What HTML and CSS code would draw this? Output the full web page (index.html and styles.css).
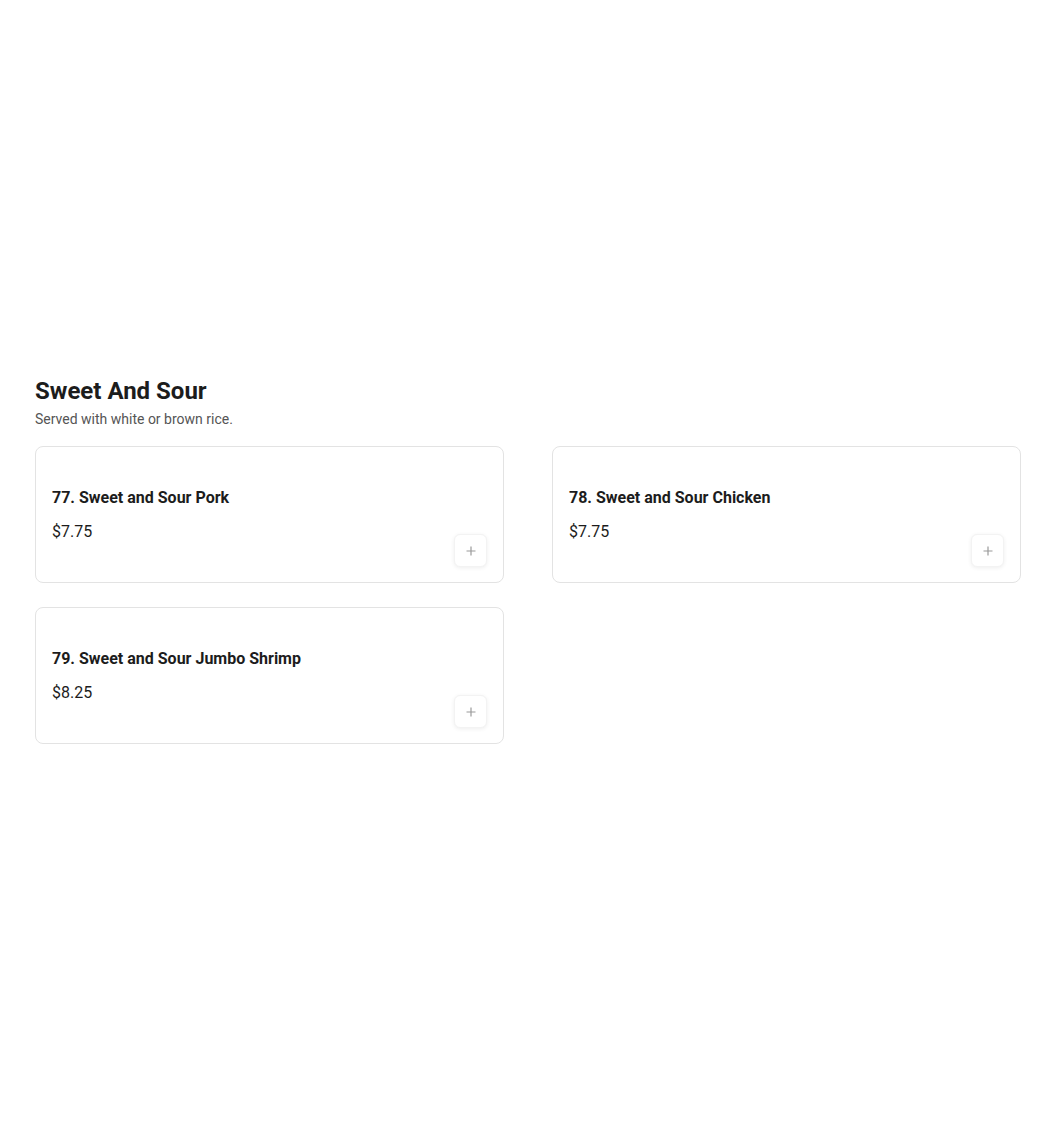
FILE: index.html
```html
<!DOCTYPE html>
<html lang="en">
<head>
<meta charset="utf-8">
<title>Sweet And Sour</title>
<link rel="stylesheet" href="styles.css">
</head>
<body>
<main class="page">
  <section class="category">
    <h2 class="category-title">Sweet And Sour</h2>
    <p class="category-desc">Served with white or brown rice.</p>
    <div class="items">
      <div class="item">
        <div class="item-info">
          <div class="item-name">77. Sweet and Sour Pork</div>
          <div class="item-price">$7.75</div>
        </div>
        <button class="add-btn" aria-label="Add"><svg width="12" height="12" viewBox="0 0 12 12"><path d="M6 1.5v9M1.5 6h9" stroke="#9a9a9a" stroke-width="1.2" fill="none"/></svg></button>
      </div>
      <div class="item">
        <div class="item-info">
          <div class="item-name">78. Sweet and Sour Chicken</div>
          <div class="item-price">$7.75</div>
        </div>
        <button class="add-btn" aria-label="Add"><svg width="12" height="12" viewBox="0 0 12 12"><path d="M6 1.5v9M1.5 6h9" stroke="#9a9a9a" stroke-width="1.2" fill="none"/></svg></button>
      </div>
      <div class="item">
        <div class="item-info">
          <div class="item-name">79. Sweet and Sour Jumbo Shrimp</div>
          <div class="item-price">$8.25</div>
        </div>
        <button class="add-btn" aria-label="Add"><svg width="12" height="12" viewBox="0 0 12 12"><path d="M6 1.5v9M1.5 6h9" stroke="#9a9a9a" stroke-width="1.2" fill="none"/></svg></button>
      </div>
    </div>
  </section>
</main>
</body>
</html>
```
FILE: styles.css
```css
* { box-sizing: border-box; }
html, body { margin: 0; padding: 0; background: #fff; }
body {
  font-family: Roboto, "Liberation Sans", Arial, sans-serif;
  color: #1c1c1c;
}
.page {
  padding: 375px 29px 0 35px;
}
.category-title {
  margin: 0;
  font-size: 24px;
  line-height: 32px;
  font-weight: 700;
  color: #1c1c1c;
}
.category-desc {
  margin: 2px 0 0;
  font-size: 14px;
  line-height: 20px;
  color: #555;
}
.items {
  margin-top: 17px;
  display: grid;
  grid-template-columns: 1fr 1fr;
  column-gap: 48px;
  row-gap: 24px;
}
.item {
  border: 1px solid #e3e3e3;
  border-radius: 8px;
  padding: 16px 16px 15px;
  display: flex;
  justify-content: space-between;
  align-items: flex-end;
  height: 137px;
}
.item-info {
  align-self: flex-start;
  padding-top: 25px;
  display: flex;
  flex-direction: column;
  gap: 14px;
}
.item-name {
  font-size: 16px;
  line-height: 20px;
  font-weight: 700;
  color: #1c1c1c;
}
.item-price {
  font-size: 16px;
  line-height: 20px;
  color: #1c1c1c;
}
.add-btn {
  width: 33px;
  height: 33px;
  border: 1px solid #f3f3f3;
  border-radius: 6px;
  background: #fff;
  box-shadow: 0 1px 4px rgba(0,0,0,0.07);
  display: flex;
  align-items: center;
  justify-content: center;
  padding: 0;
}
.add-btn svg { display: block; }
```
